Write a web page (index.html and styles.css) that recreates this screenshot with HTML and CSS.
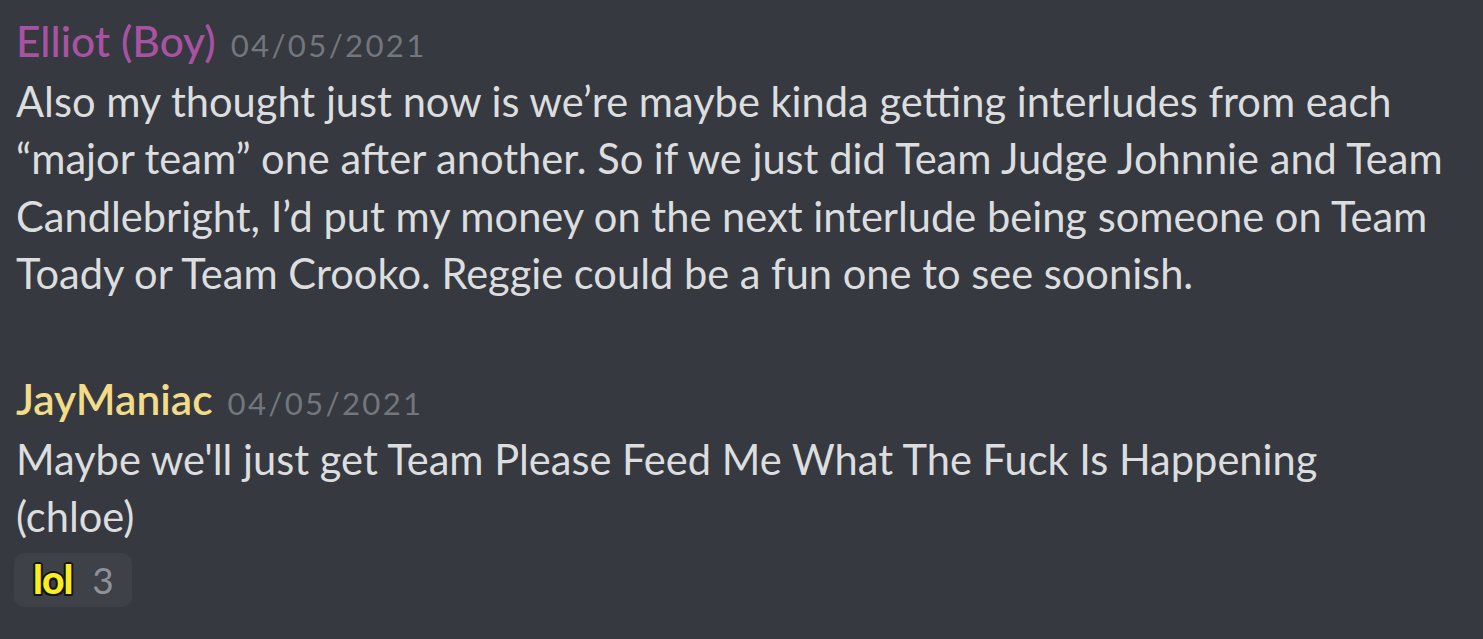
FILE: index.html
```html
<!DOCTYPE html>
<html>
<head>
<meta charset="utf-8">
<link rel="stylesheet" href="styles.css">
</head>
<body>
<div class="chat">
  <div class="message">
    <div class="header">
      <span class="name name-elliot">Elliot (Boy)</span>
      <span class="time">04/05/2021</span>
    </div>
    <div class="content">Also my thought just now is we’re maybe kinda getting interludes from each “major team” one after another. So if we just did Team Judge Johnnie and Team Candlebright, I’d put my money on the next interlude being someone on Team Toady or Team Crooko. Reggie could be a fun one to see soonish.</div>
  </div>
  <div class="message second">
    <div class="header">
      <span class="name name-jay">JayManiac</span>
      <span class="time">04/05/2021</span>
    </div>
    <div class="content">Maybe we'll just get Team Please Feed Me What The Fuck Is Happening<br>(chloe)</div>
    <div class="reactions">
      <div class="reaction">
        <span class="emoji-lol">lol</span>
        <span class="count">3</span>
      </div>
    </div>
  </div>
</div>
</body>
</html>
```
FILE: styles.css
```css
html, body {
  margin: 0;
  padding: 0;
  background: #36393f;
}
body {
  width: 1483px;
  height: 639px;
  overflow: hidden;
  font-family: Lato, "Noto Sans", sans-serif;
}
.chat {
  display: flex;
  flex-direction: column;
  padding: 12px 0 0 16px;
}
.message {
  display: flex;
  flex-direction: column;
}
.second {
  margin-top: 68px;
}
.header {
  display: flex;
  align-items: baseline;
  height: 57.2px;
  line-height: 57.2px;
  margin-bottom: 4px;
  white-space: nowrap;
}
.name {
  font-size: 42.5px;
  font-weight: 500;
}
.name-elliot {
  color: #a853a2;
}
.name-jay {
  color: #f2dc88;
  font-weight: 600;
}
.time {
  margin-left: 15px;
  font-size: 31.2px;
  letter-spacing: 2.3px;
  color: #72767d;
}
.content {
  font-size: 41.6px;
  line-height: 57.2px;
  color: #dcddde;
  width: 1451px;
}
.reactions {
  display: flex;
  margin-top: 7px;
}
.reaction {
  display: flex;
  align-items: center;
  height: 54px;
  padding: 0 18px 0 19px;
  box-sizing: border-box;
  background: #3e4147;
  border-radius: 10px;
  margin-left: -2px;
}
.emoji-lol {
  font-family: Lato, "Liberation Sans", sans-serif;
  font-weight: 900;
  font-size: 39px;
  line-height: 1;
  letter-spacing: -1px;
  color: #fbee1f;
  text-shadow:
    2px 0 0 #141414, -2px 0 0 #141414, 0 2px 0 #141414, 0 -2px 0 #141414,
    1.5px 1.5px 0 #141414, -1.5px 1.5px 0 #141414, 1.5px -1.5px 0 #141414, -1.5px -1.5px 0 #141414;
}
.count {
  margin-left: 20px;
  font-size: 37px;
  line-height: 1;
  color: #8e9297;
}
```
